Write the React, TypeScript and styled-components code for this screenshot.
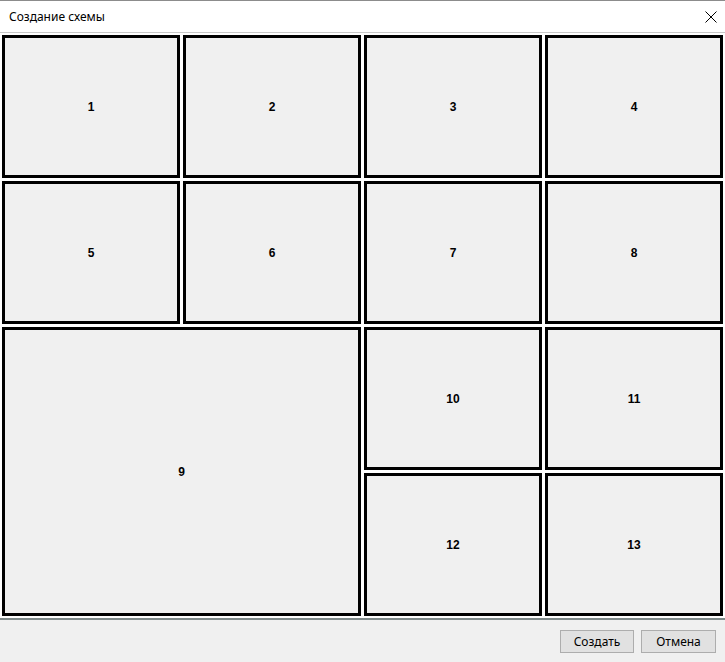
import { ReactElement } from 'react'
import styled, { createGlobalStyle } from 'styled-components'

const GlobalStyle = createGlobalStyle`
  html, body {
    margin: 0;
    padding: 0;
    background: #f0f0f0;
  }
  * {
    box-sizing: border-box;
  }
`

const Window = styled.div`
  width: 725px;
  height: 662px;
  display: flex;
  flex-direction: column;
  background: #f0f0f0;
  border-top: 1px solid #8c8c8c;
  font-family: "Noto Sans", "Segoe UI", sans-serif;
`

const TitleBar = styled.div`
  height: 32px;
  display: flex;
  align-items: center;
  justify-content: space-between;
  padding: 0 8px 0 9px;
  background: #fff;
  border-bottom: 1px solid #c8c8c8;
`

const Title = styled.span`
  font-size: 12px;
  color: #000;
`

const CloseButton = styled.div`
  width: 12px;
  height: 12px;
  display: flex;
`

const Board = styled.div`
  display: grid;
  grid-template-columns: repeat(4, 178px);
  grid-template-rows: repeat(4, 143px);
  gap: 3px;
  padding: 2px;
  background: #fff;
  border-bottom: 2px solid #7f8a8a;
`

const Cell = styled.div<{ colSpan?: number, rowSpan?: number }>`
  grid-column: span ${({ colSpan }) => colSpan ?? 1};
  grid-row: span ${({ rowSpan }) => rowSpan ?? 1};
  border: 3px solid #000;
  background: #f0f0f0;
  display: flex;
  align-items: center;
  justify-content: center;
  font-family: "Liberation Sans", Arial, sans-serif;
  font-weight: bold;
  font-size: 12px;
  color: #000;
`

const Footer = styled.div`
  flex: 1;
  display: flex;
  justify-content: flex-end;
  align-items: flex-start;
  gap: 7px;
  padding: 10px 9px 0 0;
`

const Button = styled.button<{ w: number }>`
  width: ${({ w }) => w}px;
  height: 23px;
  background: #e1e1e1;
  border: 1px solid #adadad;
  font-family: "Noto Sans", "Segoe UI", sans-serif;
  font-size: 12px;
  color: #000;
  padding: 0;
`

const cells: Array<{ n: number, col?: number, row?: number }> = [
  { n: 1 }, { n: 2 }, { n: 3 }, { n: 4 },
  { n: 5 }, { n: 6 }, { n: 7 }, { n: 8 },
  { n: 9, col: 2, row: 2 }, { n: 10 }, { n: 11 },
  { n: 12 }, { n: 13 }
]

export default function App (): ReactElement {
  return (
    <>
      <GlobalStyle />
      <Window>
        <TitleBar>
          <Title>Создание схемы</Title>
          <CloseButton>
            <svg width="12" height="12" viewBox="0 0 12 12">
              <path d="M0.5 0.5 L11.5 11.5 M11.5 0.5 L0.5 11.5" stroke="#000" strokeWidth="1" fill="none" />
            </svg>
          </CloseButton>
        </TitleBar>
        <Board>
          {cells.map(c => (
            <Cell key={c.n} colSpan={c.col} rowSpan={c.row}>{c.n}</Cell>
          ))}
        </Board>
        <Footer>
          <Button w={74}>Создать</Button>
          <Button w={75}>Отмена</Button>
        </Footer>
      </Window>
    </>
  )
}
